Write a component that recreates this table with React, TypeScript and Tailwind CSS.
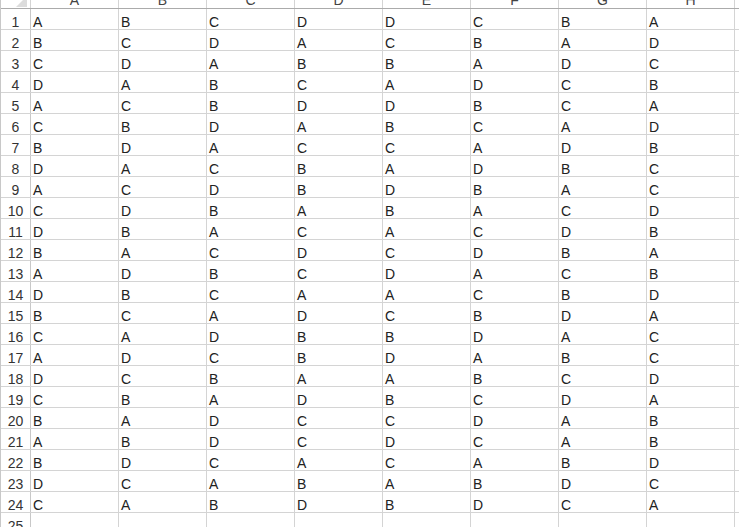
const cols = ["A", "B", "C", "D", "E", "F", "G", "H", "I"];

const data = [
  "ABCDDCBA",
  "BCDACBAD",
  "CDABBADC",
  "DABCADCB",
  "ACBDDBCA",
  "CBDABCAD",
  "BDACCADB",
  "DACBADBC",
  "ACDBDBAC",
  "CDBABACD",
  "DBACACDB",
  "BACDCDBA",
  "ADBCDACB",
  "DBCAACBD",
  "BCADCBDA",
  "CADBBDAC",
  "ADCBDABC",
  "DCBAABCD",
  "CBADBCDA",
  "BADCCDAB",
  "ABDCDCAB",
  "BDCACABD",
  "DCABABDC",
  "CABDBDCA",
  "        ",
];

const font = { fontFamily: '"Liberation Sans", Arial, sans-serif' };

function Corner() {
  return (
    <div className="w-[30px] h-[8px] border-r border-[#d4d4d4] relative overflow-hidden">
      <svg width="30" height="8" className="absolute left-0 top-0">
        <polygon points="26,-4 26,7 15,7" fill="#dcdcdc" />
      </svg>
    </div>
  );
}

export default function App() {
  return (
    <div className="w-[739px] h-[527px] overflow-hidden bg-white text-[14px] text-[#222]" style={font}>
      <div className="border-l border-[#c8c8c8] w-[900px]">
        {/* column header row, mostly scrolled off the top */}
        <div className="flex border-b border-[#ababab]">
          <Corner />
          {cols.map((c) => (
            <div
              key={c}
              className="w-[88px] h-[8px] border-r border-[#d4d4d4] overflow-hidden flex items-end justify-center pb-[1px] leading-none text-[#444]"
            >
              {c}
            </div>
          ))}
        </div>

        {data.map((row, i) => (
          <div key={i} className="flex border-b border-[#d4d4d4]">
            <div className="w-[30px] h-[20px] border-r border-[#c8c8c8] flex items-end justify-center leading-none text-[#333]">
              {i + 1}
            </div>
            {cols.map((c, j) => (
              <div
                key={c}
                className="w-[88px] h-[20px] border-r border-[#d4d4d4] flex items-end pl-[2px] leading-none"
              >
                {row[j] && row[j] !== " " ? row[j] : ""}
              </div>
            ))}
          </div>
        ))}
      </div>
    </div>
  );
}
